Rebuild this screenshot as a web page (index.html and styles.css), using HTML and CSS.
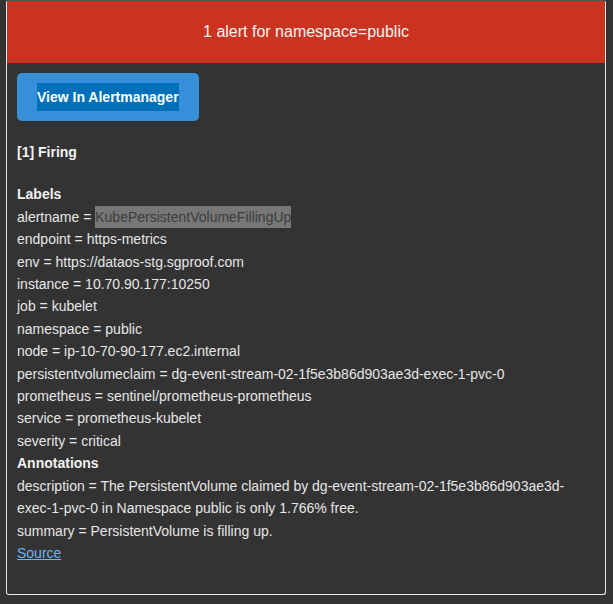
FILE: index.html
```html
<!DOCTYPE html>
<html>
<head>
<meta charset="utf-8">
<link rel="stylesheet" href="styles.css">
</head>
<body>
<div class="container">
  <div class="alert-header">1 alert for namespace=public</div>
  <div class="content">
    <div class="block"><a class="btn-primary" href="#">View In Alertmanager</a></div>
    <div class="block"><strong>[1] Firing</strong></div>
    <div class="block">
      <strong>Labels</strong><br>
      alertname = <span class="hl">KubePersistentVolumeFillingUp</span><br>
      endpoint = https-metrics<br>
      env = https://dataos-stg.sgproof.com<br>
      instance = 10.70.90.177:10250<br>
      job = kubelet<br>
      namespace = public<br>
      node = ip-10-70-90-177.ec2.internal<br>
      persistentvolumeclaim = dg-event-stream-02-1f5e3b86d903ae3d-exec-1-pvc-0<br>
      prometheus = sentinel/prometheus-prometheus<br>
      service = prometheus-kubelet<br>
      severity = critical<br>
      <strong>Annotations</strong><br>
      description = The PersistentVolume claimed by dg-event-stream-02-1f5e3b86d903ae3d-exec-1-pvc-0 in Namespace public is only 1.766% free.<br>
      summary = PersistentVolume is filling up.<br>
      <a class="source" href="#">Source</a><br>
    </div>
  </div>
</div>
</body>
</html>
```
FILE: styles.css
```css
html, body {
  margin: 0;
  padding: 0;
  background: #333333;
}
body {
  font-family: "Liberation Sans", Arial, sans-serif;
  font-size: 14px;
  line-height: 1.6em;
  color: #e6e6e6;
}
.container {
  width: 600px;
  box-sizing: border-box;
  margin: 0 0 0 6px;
  border: 1px solid #e9e9e9;
  border-top-color: #555;
  border-radius: 3px;
  overflow: hidden;
}
.alert-header {
  background: #c9331f;
  color: #f4f4f4;
  font-size: 16px;
  line-height: 22px;
  text-align: center;
  padding: 20px;
  height: 22px;
}
.content {
  padding: 10px;
}
.block {
  padding: 0 0 20px;
}
.btn-primary {
  display: inline-block;
  text-decoration: none;
  color: #ffffff;
  background-color: #0070b8;
  border: solid #3690d9;
  border-width: 10px 20px;
  line-height: 2em;
  font-weight: bold;
  text-align: center;
  border-radius: 5px;
  vertical-align: top;
}
.hl {
  background: #777777;
  color: #3c3c3c;
  padding: 3px 0;
}
.source {
  color: #6cb4ee;
  text-decoration: underline;
}
strong {
  color: #f2f2f2;
}
```
